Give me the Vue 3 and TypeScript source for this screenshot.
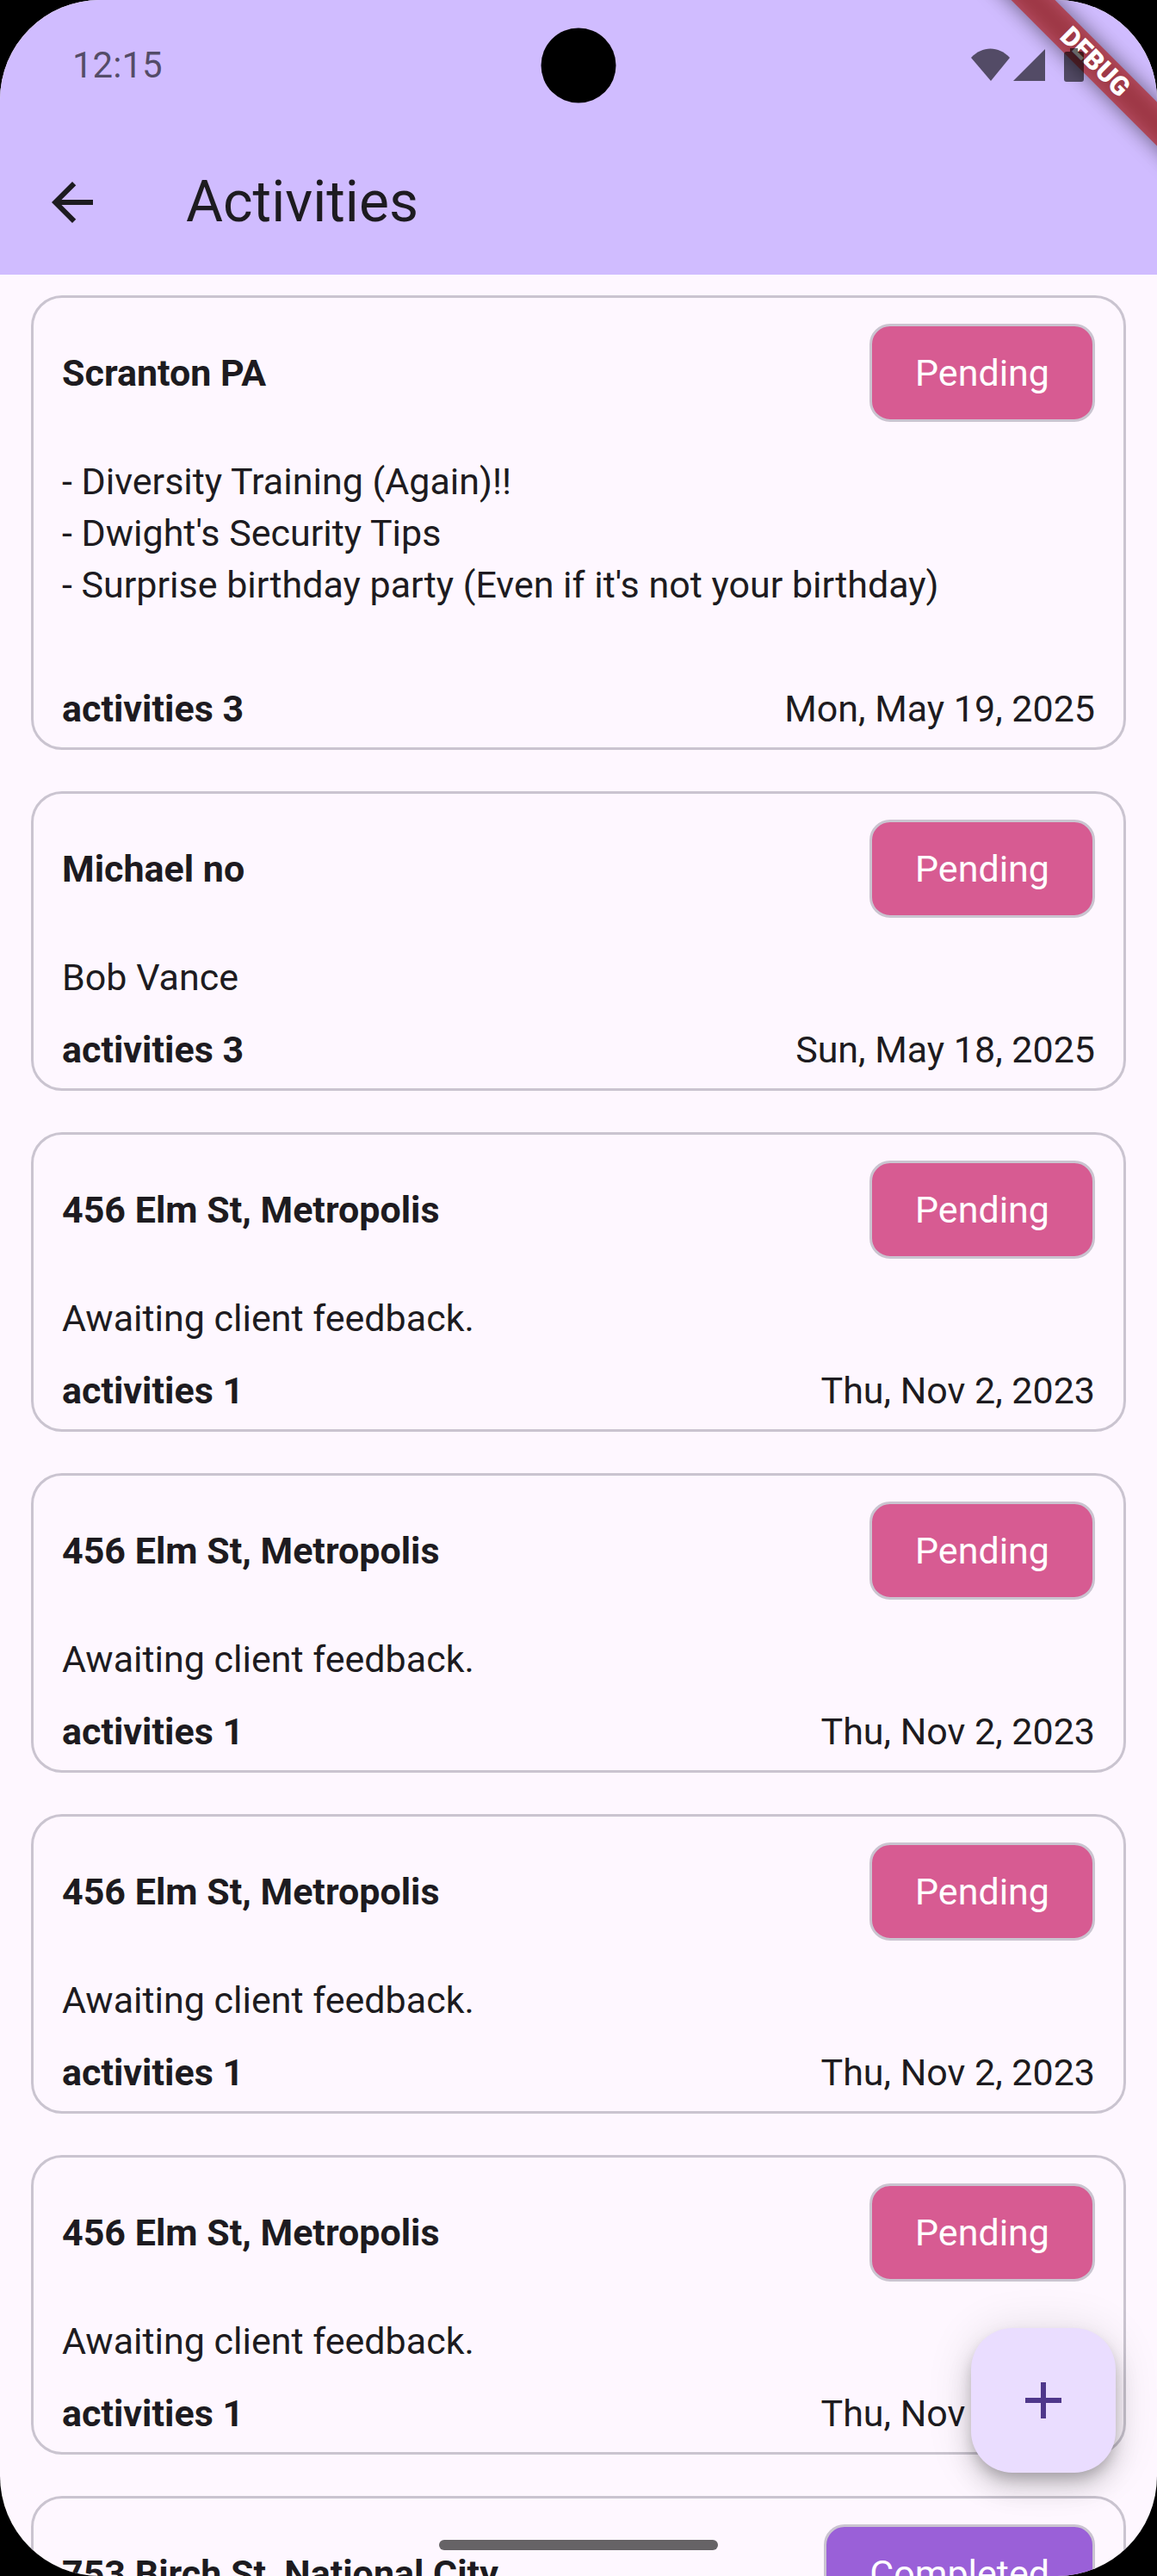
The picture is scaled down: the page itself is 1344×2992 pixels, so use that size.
<script setup lang="ts">
type Status = 'Pending' | 'Completed'

interface Visit {
  id: number
  place: string
  notes: string
  activities: number
  date: string
  status: Status
}

const elm = {
  place: '456 Elm St, Metropolis',
  notes: 'Awaiting client feedback.',
  activities: 1,
  date: 'Thu, Nov 2, 2023',
  status: 'Pending' as Status,
}

const visits: Visit[] = [
  {
    id: 1,
    place: 'Scranton PA',
    notes:
      "- Diversity Training (Again)!!\n- Dwight's Security Tips\n- Surprise birthday party (Even if it's not your birthday)\n\u00a0",
    activities: 3,
    date: 'Mon, May 19, 2025',
    status: 'Pending',
  },
  {
    id: 2,
    place: 'Michael no',
    notes: 'Bob Vance',
    activities: 3,
    date: 'Sun, May 18, 2025',
    status: 'Pending',
  },
  { id: 3, ...elm },
  { id: 4, ...elm },
  { id: 5, ...elm },
  { id: 6, ...elm },
  {
    id: 7,
    place: '753 Birch St, National City',
    notes: '',
    activities: 1,
    date: '',
    status: 'Completed',
  },
]
</script>

<template>
  <div class="screen">
    <header class="top">
      <div class="debug"><span>DEBUG</span></div>
      <div class="status-bar">
        <span class="time">12:15</span>
        <span class="camera"></span>
        <svg class="indicators" width="132" height="39" viewBox="0 0 132 39" aria-hidden="true">
          <path d="M0 11C13-3 32-3 45 11L23 38Z" />
          <path d="M49 38L86 1V38Z" />
          <path d="M115 0h9v4h4q3 0 3 3v29q0 3-3 3h-17q-3 0-3-3V7q0-3 3-3h4Z" />
        </svg>
      </div>
      <div class="app-bar">
        <button class="back" type="button" aria-label="Back">
          <svg width="72" height="72" viewBox="0 0 24 24" aria-hidden="true">
            <path d="M20 11H7.83l5.59-5.59L12 4l-8 8 8 8 1.41-1.41L7.83 13H20v-2z" />
          </svg>
        </button>
        <h1>Activities</h1>
      </div>
    </header>

    <main class="list">
      <article v-for="visit in visits" :key="visit.id" class="card">
        <div class="row">
          <h2>{{ visit.place }}</h2>
          <span class="badge" :class="visit.status.toLowerCase()">{{ visit.status }}</span>
        </div>
        <p class="notes">{{ visit.notes }}</p>
        <div class="row">
          <strong>activities {{ visit.activities }}</strong>
          <time>{{ visit.date }}</time>
        </div>
      </article>
    </main>

    <button class="add" type="button" aria-label="Add activity">
      <svg width="72" height="72" viewBox="0 0 24 24" aria-hidden="true">
        <path d="M19 13h-6v6h-2v-6H5v-2h6V5h2v6h6v2z" />
      </svg>
    </button>
    <div class="home-handle"></div>
  </div>
</template>

<style>
body {
  background: #000;
}
</style>

<style scoped>
.screen {
  position: relative;
  display: flex;
  flex-direction: column;
  height: 100vh;
  overflow: hidden;
  border-radius: 116px;
  background: #fef7ff;
  color: #1d1b20;
  font-family: Roboto, sans-serif;
  font-size: 43px;
  line-height: 60px;
}

.top {
  position: relative;
  flex: none;
  background: #d0bcff;
}

.status-bar {
  position: relative;
  display: flex;
  align-items: center;
  justify-content: space-between;
  height: 151px;
  padding: 0 84px;
  color: rgba(0, 0, 0, 0.6);
  font-size: 42px;
}

.camera {
  position: absolute;
  left: 50%;
  top: 50%;
  width: 87px;
  height: 87px;
  border-radius: 50%;
  background: #000;
  transform: translate(-50%, -50%);
}

.indicators {
  fill: rgba(0, 0, 0, 0.6);
}

.debug {
  position: absolute;
  top: 0;
  right: 0;
  width: 260px;
  height: 260px;
  overflow: hidden;
}

.debug span {
  position: absolute;
  top: 54px;
  right: -108px;
  width: 360px;
  height: 36px;
  color: #fff;
  font-size: 31px;
  font-weight: 900;
  line-height: 36px;
  text-align: center;
  transform: rotate(45deg);
}

/* The ribbon is translucent, so its shadow has to show through it. */
.debug span::before,
.debug span::after {
  content: '';
  position: absolute;
  inset: 0;
  z-index: -1;
}

.debug span::before {
  background: rgba(0, 0, 0, 0.5);
  filter: blur(12px);
}

.debug span::after {
  background: rgba(183, 28, 28, 0.63);
}

.app-bar {
  display: flex;
  align-items: center;
  gap: 96px;
  height: 168px;
  padding: 0 48px;
}

button {
  display: flex;
  align-items: center;
  justify-content: center;
  padding: 0;
  border: 0;
}

.back {
  background: none;
  fill: #1d1b20;
}

h1 {
  margin: 0;
  font-size: 66px;
  font-weight: 400;
  line-height: 84px;
}

.list {
  display: flex;
  flex-direction: column;
  gap: 48px;
  padding: 24px 36px;
}

.card {
  flex: none;
  padding: 30px 33px 15px;
  border: 3px solid #cac4d0;
  border-radius: 36px;
}

.row {
  display: flex;
  align-items: center;
  justify-content: space-between;
}

h2 {
  margin: 0;
  font-size: 43px;
  font-weight: 700;
}

.badge {
  padding: 24px 50px;
  border: 3px solid #cac4d0;
  border-radius: 24px;
  color: #fff;
}

.pending {
  background: #d75b92;
}

.completed {
  background: #9a60d8;
}

.notes {
  margin: 39px 0 24px;
  white-space: pre-line;
}

.add {
  position: absolute;
  right: 48px;
  bottom: 120px;
  width: 168px;
  height: 168px;
  border-radius: 48px;
  background: #eaddff;
  fill: #4f378b;
  box-shadow:
    0 9px 15px -3px rgba(0, 0, 0, 0.2),
    0 18px 30px rgba(0, 0, 0, 0.14),
    0 3px 54px rgba(0, 0, 0, 0.12);
}

.home-handle {
  position: absolute;
  bottom: 30px;
  left: 50%;
  width: 324px;
  height: 12px;
  border-radius: 6px;
  background: rgba(0, 0, 0, 0.6);
  transform: translateX(-50%);
}
</style>
